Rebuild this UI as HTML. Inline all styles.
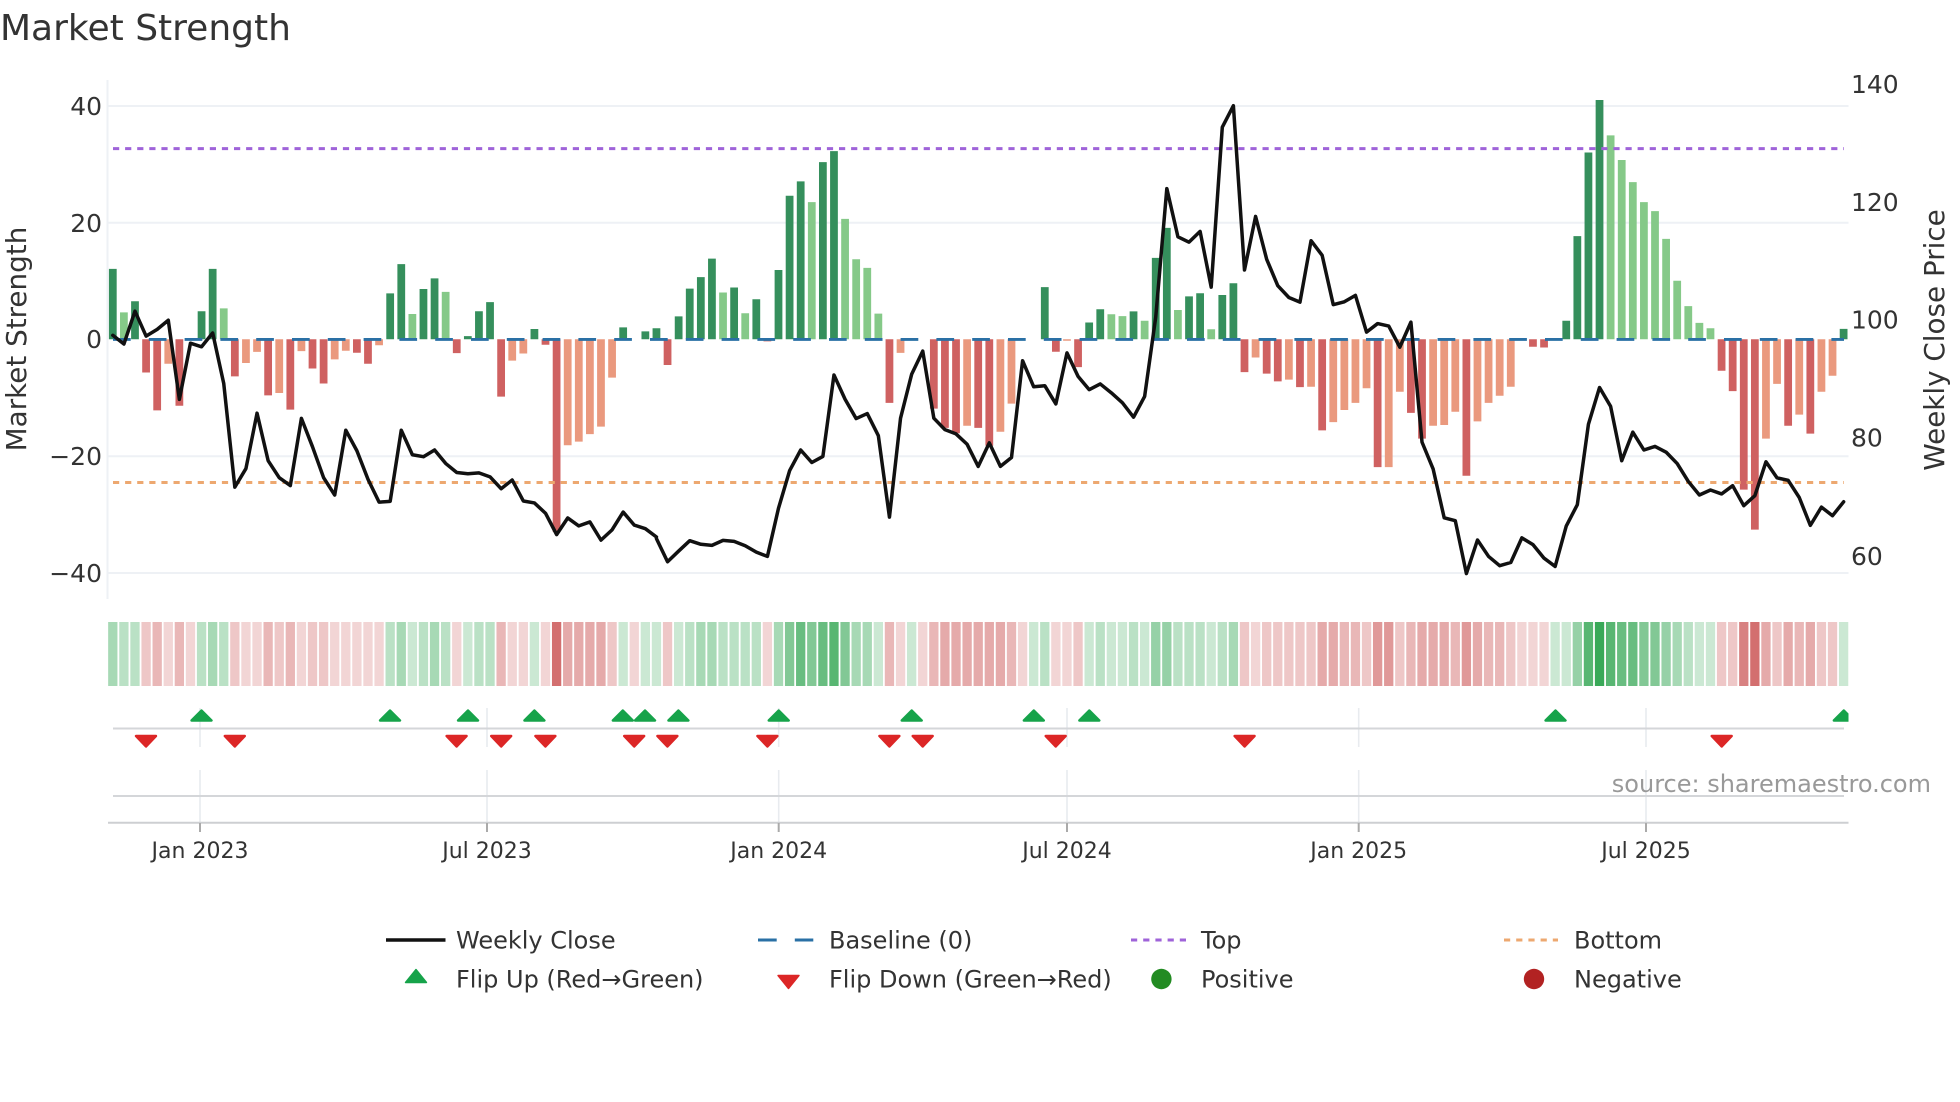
<!DOCTYPE html>
<html>
<head>
<meta charset="utf-8">
<title>Market Strength</title>
<style>
html,body{margin:0;padding:0;background:#fff;width:1960px;height:1102px;overflow:hidden}
svg{display:block}
text{font-family:"DejaVu Sans","Liberation Sans",sans-serif;fill:#333}
</style>
</head>
<body>
<svg width="1960" height="1102" viewBox="0 0 1960 1102" xmlns="http://www.w3.org/2000/svg">
<defs><clipPath id="c"><rect x="108" y="600" width="1740.5" height="240"/></clipPath></defs>
<rect width="1960" height="1102" fill="#fff"/>

<text x="0" y="40" font-size="36">Market Strength</text>

<!-- grid -->
<g stroke="#eef1f5" stroke-width="2" fill="none">
<path d="M107.5 80V599"/>
<path d="M108 106H1848.5M108 222.7H1848.5M108 456.3H1848.5M108 573H1848.5"/>
</g>

<!-- bars frame 1 -->
<g transform="translate(112.8 0) scale(11.095 .39541)" stroke-width=".7" fill="none" stroke-opacity=".97">
<path stroke="#2e8b57" d="M0 858V680M2 858V762M8 858V787M9 858V680M25 858V742M26 858V668M28 858V731M29 858V704M32 858V850M33 858V787M34 858V764M38 858V832M46 858V828M48 858V838M49 858V830"/>
<path stroke="#81c784" d="M1 858V790M10 858V780M27 858V794M30 858V738"/>
<path stroke="#cd5c5c" d="M3 858V942M4 858V1038M6 858V1026M11 858V952M14 858V1000M16 858V1036M18 858V932M19 858V970M22 858V892M23 858V920M31 858V893M35 858V1003M39 858V872M40 858V1345"/>
<path stroke="#e9967a" d="M5 858V920M12 858V918M13 858V890M15 858V994M17 858V888M20 858V909M21 858V887M24 858V873M36 858V912M37 858V894M41 858V1126M42 858V1117M43 858V1098M44 858V1079M45 858V955"/>
</g>
<!-- bars frame 2 -->
<g transform="translate(112.8 60) scale(11.095 .35714)" stroke-width=".7" fill="none" stroke-opacity=".97">
<path stroke="#2e8b57" d="M51 782V718M52 782V640M53 782V608M54 782V556M56 782V637M58 782V670M60 782V588M61 782V380M62 782V340M64 782V286M65 782V255M84 782V636M88 782V735M89 782V698M92 782V704M94 782V554M95 782V470M97 782V662M98 782V653M100 782V658M101 782V625M131 782V730M132 782V493M133 782V259M134 782V112M156 782V753"/>
<path stroke="#81c784" d="M55 782V651M57 782V709M63 782V398M66 782V445M67 782V558M68 782V582M69 782V710M90 782V712M91 782V717M93 782V730M96 782V700M99 782V754M135 782V211M136 782V280M137 782V342M138 782V398M139 782V423M140 782V501M141 782V618M142 782V689M143 782V736M144 782V751"/>
<path stroke="#cd5c5c" d="M50 782V854M59 782V788M70 782V960M74 782V976M75 782V1030M76 782V1045M78 782V1030M79 782V1080M85 782V817M87 782V860M102 782V874M104 782V878M105 782V900M107 782V916M109 782V1037M114 782V1140M117 782V988M118 782V1060M122 782V1164M128 782V803M129 782V805M145 782V870M146 782V927M147 782V1203M148 782V1315M151 782V1024M153 782V1046"/>
<path stroke="#e9967a" d="M71 782V820M77 782V1024M80 782V1041M81 782V962M86 782V786M103 782V833M106 782V895M108 782V915M110 782V1014M111 782V980M112 782V960M113 782V919M115 782V1140M116 782V929M119 782V1024M120 782V1022M121 782V985M123 782V1012M124 782V960M125 782V940M126 782V915M149 782V1060M150 782V907M152 782V993M154 782V929M155 782V884"/>
</g>

<!-- reference lines -->
<path d="M113 339.4H1844" stroke="#2a70a5" stroke-width="2.9" stroke-dasharray="17.7 18.1" fill="none"/>
<path d="M113 148.6H1844" stroke="#9f63d9" stroke-width="3" stroke-dasharray="6.2 5.9" fill="none"/>
<path d="M113 482.5H1844" stroke="#eda870" stroke-width="3" stroke-dasharray="6.2 5.9" fill="none"/>

<!-- price line -->
<g fill="none" stroke="#111" stroke-width="3.5" stroke-linejoin="round" stroke-linecap="round">
<g transform="translate(112.8 0) scale(11.095 .39541)">
<polyline vector-effect="non-scaling-stroke" points="0,848 1,870 2,787 3,850 4,833 5,810 6,1010 7,868 8,877 9,842 10,970 11,1232 12,1185 13,1045 14,1165 15,1208 16,1228 17,1058 18,1130 19,1208 20,1252 21,1088 22,1140 23,1212 24,1270 25,1268 26,1088 27,1150 28,1155 29,1138 30,1172 31,1195 32,1198 33,1196 34,1206 35,1236 36,1214 37,1267 38,1272 39,1298 40,1352 41,1310 42,1330 43,1320 44,1366 45,1340 46,1295 47,1328 48,1337 49,1358"/>
</g>
<g transform="translate(112.8 60) scale(11.095 .35714)">
<polyline vector-effect="non-scaling-stroke" points="49,1340 50,1405 51,1375 52,1346 53,1356 54,1359 55,1345 56,1348 57,1360 58,1378 59,1390 60,1255 61,1150 62,1092 63,1127 64,1110 65,882 66,950 67,1004 68,990 69,1052 70,1280 71,1003 72,880 73,815 74,1003 75,1035 76,1047 77,1076 78,1138 79,1072 80,1138 81,1113 82,842 83,915 84,912 85,963 86,820 87,886 88,923 89,907 90,932 91,960 92,1000 93,942 94,720 95,360 96,495 97,510 98,480 99,636 100,188 101,128 102,588 103,438 104,558 105,632 106,665 107,678 108,506 109,547 110,685 111,677 112,659 113,762 114,738 115,745 116,804 117,734 118,1070 119,1145 120,1282 121,1290 122,1438 123,1344 124,1390 125,1416 126,1407 127,1338 128,1357 129,1395 130,1418 131,1305 132,1245 133,1020 134,917 135,970 136,1122 137,1042 138,1092 139,1082 140,1098 141,1130 142,1180 143,1218 144,1204 145,1215 146,1192 147,1248 148,1220 149,1125 150,1170 151,1177 152,1225 153,1303 154,1252 155,1276 156,1237"/>
</g>
</g>

<!-- y ticks -->
<g font-size="25" text-anchor="end">
<text x="102" y="115">40</text>
<text x="102" y="232">20</text>
<text x="102" y="348">0</text>
<text x="102" y="465">−20</text>
<text x="102" y="582">−40</text>
</g>
<g font-size="25">
<text x="1851" y="93">140</text>
<text x="1851" y="211">120</text>
<text x="1851" y="328.5">100</text>
<text x="1851" y="446.5">80</text>
<text x="1851" y="565">60</text>
</g>
<text font-size="27.8" text-anchor="middle" transform="translate(26 339) rotate(-90)">Market Strength</text>
<text font-size="27.8" text-anchor="middle" transform="translate(1944 340) rotate(-90)">Weekly Close Price</text>

<!-- heat strip -->
<g transform="translate(112.8 622) scale(11.095 64)" stroke-width=".838" fill="none">
<g stroke="#2ea44f">
<path stroke-opacity=".25" d="M27 0V1M32 0V1M38 0V1M46 0V1M48 0V1M49 0V1M51 0V1M69 0V1M72 0V1M83 0V1M88 0V1M90 0V1M91 0V1M93 0V1M99 0V1M130 0V1M131 0V1M143 0V1M144 0V1M156 0V1"/>
<path stroke-opacity=".33" d="M1 0V1M2 0V1M8 0V1M10 0V1M25 0V1M28 0V1M30 0V1M33 0V1M34 0V1M52 0V1M55 0V1M56 0V1M57 0V1M58 0V1M84 0V1M89 0V1M92 0V1M96 0V1M97 0V1M98 0V1M100 0V1M142 0V1"/>
<path stroke-opacity=".42" d="M0 0V1M9 0V1M26 0V1M29 0V1M53 0V1M54 0V1M60 0V1M67 0V1M68 0V1M101 0V1M141 0V1"/>
<path stroke-opacity=".5" d="M94 0V1M95 0V1M132 0V1M140 0V1"/>
<path stroke-opacity=".6" d="M61 0V1M63 0V1M66 0V1M138 0V1M139 0V1"/>
<path stroke-opacity=".72" d="M62 0V1M64 0V1M136 0V1M137 0V1"/>
<path stroke-opacity=".8" d="M65 0V1M133 0V1M135 0V1"/>
<path stroke-opacity=".95" d="M134 0V1"/>
</g>
<g stroke="#c84b4b">
<path stroke-opacity=".23" d="M5 0V1M7 0V1M12 0V1M13 0V1M17 0V1M20 0V1M21 0V1M22 0V1M23 0V1M24 0V1M31 0V1M36 0V1M37 0V1M39 0V1M47 0V1M59 0V1M71 0V1M73 0V1M82 0V1M85 0V1M86 0V1M103 0V1M127 0V1M128 0V1M129 0V1"/>
<path stroke-opacity=".31" d="M3 0V1M11 0V1M15 0V1M18 0V1M19 0V1M45 0V1M50 0V1M87 0V1M102 0V1M104 0V1M105 0V1M106 0V1M107 0V1M108 0V1M113 0V1M116 0V1M126 0V1M145 0V1M146 0V1M150 0V1M154 0V1M155 0V1"/>
<path stroke-opacity=".4" d="M4 0V1M6 0V1M14 0V1M16 0V1M35 0V1M70 0V1M74 0V1M81 0V1M111 0V1M112 0V1M117 0V1M121 0V1M124 0V1M125 0V1M152 0V1"/>
<path stroke-opacity=".47" d="M41 0V1M42 0V1M43 0V1M44 0V1M75 0V1M76 0V1M77 0V1M78 0V1M79 0V1M80 0V1M109 0V1M110 0V1M118 0V1M119 0V1M120 0V1M123 0V1M149 0V1M151 0V1M153 0V1"/>
<path stroke-opacity=".57" d="M114 0V1M115 0V1M122 0V1"/>
<path stroke-opacity=".7" d="M147 0V1"/>
<path stroke-opacity=".8" d="M40 0V1M148 0V1"/>
</g>
</g>

<!-- lower panel vertical grid -->
<g stroke="#e8ebef" stroke-width="1.6" fill="none">
<path d="M200 708V747M487 708V747M778.7 708V747M1067 708V747M1358.7 708V747M1646 708V747"/>
<path d="M200 770V823M487 770V823M778.7 770V823M1067 770V823M1358.7 770V823M1646 770V823"/>
</g>
<path d="M113 728.5H1844M113 796H1844" stroke="#d4d6d9" stroke-width="2" fill="none"/>
<path d="M108 822.7H1848.5" stroke="#cdcfd2" stroke-width="2" fill="none"/>
<path d="M200 823V832M487 823V832M778.7 823V832M1067 823V832M1358.7 823V832M1646 823V832" stroke="#aaa" stroke-width="2" fill="none"/>

<!-- flips -->
<g clip-path="url(#c)" stroke-width="2.4" stroke-linejoin="round">
<path fill="#16a34a" stroke="#16a34a" d="M201.5 710.5l10 10h-20zM390 710.5l10 10h-20zM468 710.5l10 10h-20zM534.4 710.5l10 10h-20zM622.8 710.5l10 10h-20zM645 710.5l10 10h-20zM678.4 710.5l10 10h-20zM778.7 710.5l10 10h-20zM911.7 710.5l10 10h-20zM1033.8 710.5l10 10h-20zM1089.3 710.5l10 10h-20zM1555.5 710.5l10 10h-20zM1843.8 710.5l10 10h-20z"/>
<path fill="#dc2626" stroke="#dc2626" d="M146 746.5l-10-10.5h20zM234.8 746.5l-10-10.5h20zM456.6 746.5l-10-10.5h20zM501.2 746.5l-10-10.5h20zM545.4 746.5l-10-10.5h20zM634.2 746.5l-10-10.5h20zM667.4 746.5l-10-10.5h20zM767.4 746.5l-10-10.5h20zM889.4 746.5l-10-10.5h20zM922.7 746.5l-10-10.5h20zM1055.7 746.5l-10-10.5h20zM1244.6 746.5l-10-10.5h20zM1721.7 746.5l-10-10.5h20z"/>
</g>

<text x="1931" y="792" font-size="24" text-anchor="end" style="fill:#999">source: sharemaestro.com</text>

<!-- x ticks -->
<g font-size="22" text-anchor="middle">
<text x="200" y="858">Jan 2023</text>
<text x="487" y="858">Jul 2023</text>
<text x="778.7" y="858">Jan 2024</text>
<text x="1067" y="858">Jul 2024</text>
<text x="1358.7" y="858">Jan 2025</text>
<text x="1646" y="858">Jul 2025</text>
</g>

<!-- legend -->
<path d="M386 940H445.5" stroke="#111" stroke-width="3.5" fill="none"/>
<path d="M758 940H776.7M794.8 940H813.3" stroke="#2a70a5" stroke-width="2.9" fill="none"/>
<path d="M1131 940H1187" stroke="#9f63d9" stroke-width="3" stroke-dasharray="6.2 6" fill="none"/>
<path d="M1504 940H1558" stroke="#eda870" stroke-width="3" stroke-dasharray="6.2 6" fill="none"/>
<path d="M416 969.5l10.5 13h-21z" fill="#16a34a" stroke="#16a34a" stroke-width="1.4" stroke-linejoin="round"/>
<path d="M788.5 988.5l-10.5-13h21z" fill="#dc2626" stroke="#dc2626" stroke-width="1.4" stroke-linejoin="round"/>
<circle cx="1161.4" cy="979" r="10.2" fill="#228b22"/>
<circle cx="1534" cy="979" r="10.2" fill="#b22222"/>
<g font-size="24">
<text x="456" y="948.5">Weekly Close</text>
<text x="829" y="948.5">Baseline (0)</text>
<text x="1201" y="948.5">Top</text>
<text x="1574" y="948.5">Bottom</text>
<text x="456" y="987.5">Flip Up (Red→Green)</text>
<text x="829" y="987.5">Flip Down (Green→Red)</text>
<text x="1201" y="987.5">Positive</text>
<text x="1574" y="987.5">Negative</text>
</g>
</svg>
</body>
</html>
